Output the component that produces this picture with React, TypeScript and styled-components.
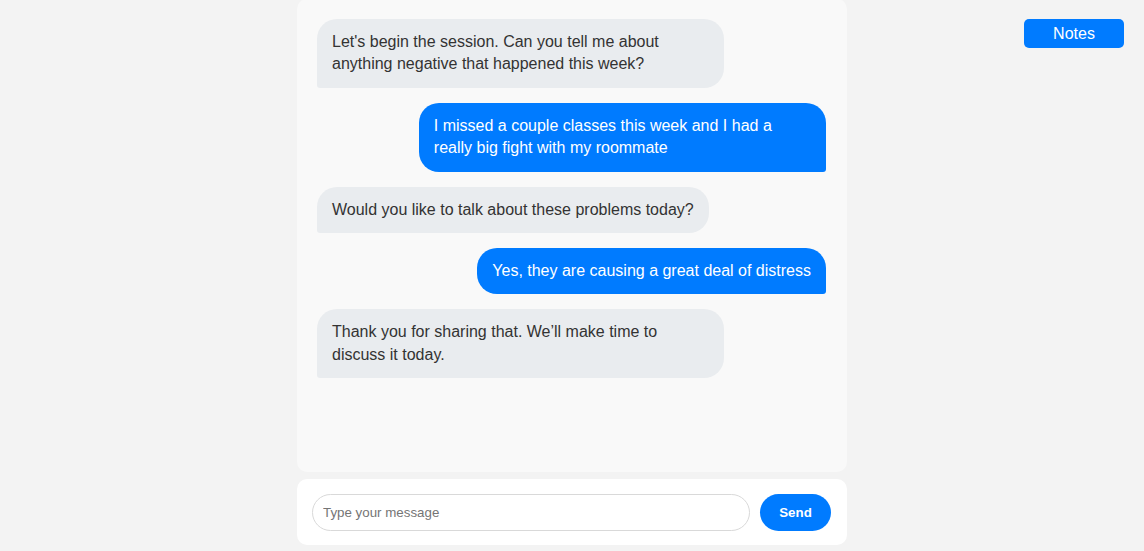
import React from "react";
import styled, { createGlobalStyle } from "styled-components";

const GlobalStyle = createGlobalStyle`
  html, body {
    margin: 0;
    padding: 0;
    background: #f3f3f3;
    font-family: "Liberation Sans", Arial, sans-serif;
  }
  * { box-sizing: border-box; }
`;

const Page = styled.div`
  position: relative;
  height: 551px;
  display: flex;
  justify-content: center;
`;

const NotesButton = styled.button`
  position: absolute;
  top: 19px;
  right: 20px;
  width: 100px;
  height: 29px;
  border: none;
  border-radius: 5px;
  background: #007bff;
  color: #fff;
  font-family: "Liberation Sans", Arial, sans-serif;
  font-size: 16px;
  cursor: pointer;
`;

const Column = styled.div`
  width: 550px;
  display: flex;
  flex-direction: column;
  gap: 7px;
  padding-bottom: 6px;
`;

const ChatPanel = styled.div`
  height: 473px;
  margin-top: -1px;
  background: #f9f9f9;
  border-radius: 10px;
  padding: 20px 21px 20px 20px;
  display: flex;
  flex-direction: column;
  gap: 15px;
`;

const Bubble = styled.div<{ $user?: boolean }>`
  max-width: 80%;
  align-self: ${(p) => (p.$user ? "flex-end" : "flex-start")};
  background: ${(p) => (p.$user ? "#007bff" : "#e9ecef")};
  color: ${(p) => (p.$user ? "#fff" : "#333")};
  padding: 12px 15px;
  font-size: 16px;
  line-height: 1.4;
  border-radius: ${(p) => (p.$user ? "20px 20px 3px 20px" : "20px 20px 20px 3px")};
`;

const InputPanel = styled.form`
  height: 66px;
  background: #fff;
  border-radius: 10px;
  padding: 15px 16px 15px 15px;
  display: flex;
  align-items: flex-start;
  gap: 10px;
`;

const MessageInput = styled.input`
  flex: 1;
  height: 37px;
  border: 1px solid #d9d9d9;
  border-radius: 20px;
  padding: 0 10px;
  font-family: "Liberation Sans", Arial, sans-serif;
  font-size: 13.33px;
  outline: none;
  &::placeholder { color: #757575; }
`;

const SendButton = styled.button`
  width: 71px;
  height: 37px;
  border: none;
  border-radius: 20px;
  background: #007bff;
  color: #fff;
  font-family: "Liberation Sans", Arial, sans-serif;
  font-size: 13.33px;
  font-weight: bold;
  cursor: pointer;
`;

const messages: { user: boolean; text: string }[] = [
  { user: false, text: "Let's begin the session. Can you tell me about anything negative that happened this week?" },
  { user: true, text: "I missed a couple classes this week and I had a really big fight with my roommate" },
  { user: false, text: "Would you like to talk about these problems today?" },
  { user: true, text: "Yes, they are causing a great deal of distress" },
  { user: false, text: "Thank you for sharing that. We\u2019ll make time to discuss it today." },
];

export default function App() {
  return (
    <>
      <GlobalStyle />
      <Page>
        <Column>
          <ChatPanel>
            {messages.map((m, i) => (
              <Bubble key={i} $user={m.user}>
                {m.text}
              </Bubble>
            ))}
          </ChatPanel>
          <InputPanel onSubmit={(e) => e.preventDefault()}>
            <MessageInput placeholder="Type your message" autoFocus />
            <SendButton type="submit">Send</SendButton>
          </InputPanel>
        </Column>
        <NotesButton>Notes</NotesButton>
      </Page>
    </>
  );
}
